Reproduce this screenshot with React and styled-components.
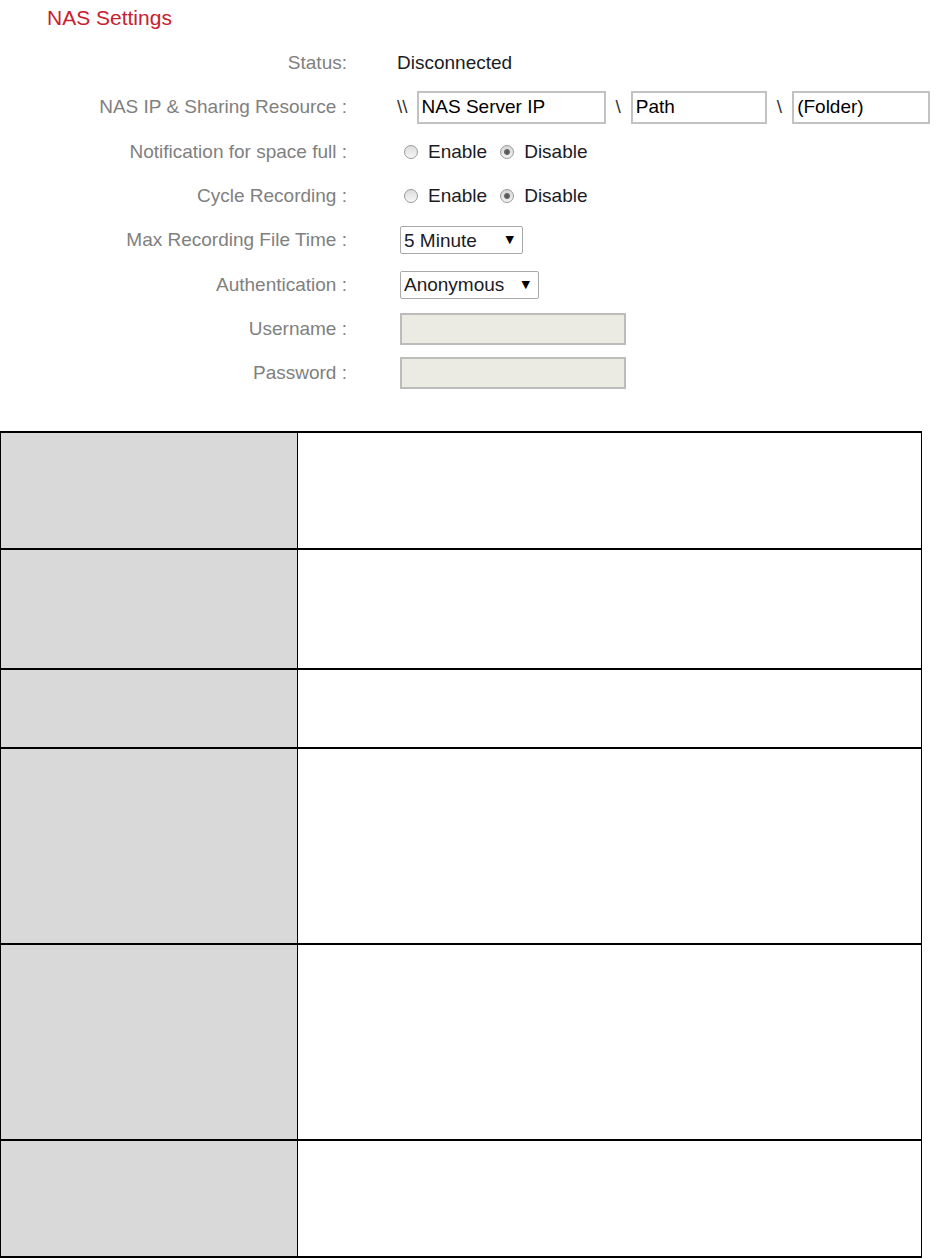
import React from "react";
import styled, { createGlobalStyle } from "styled-components";

const GlobalStyle = createGlobalStyle`
  body {
    margin: 0;
    background: #fff;
    font-family: "Liberation Sans", Arial, sans-serif;
  }
`;

const Page = styled.div`
  width: 951px;
`;

const Title = styled.h2`
  margin: 0;
  height: 41px;
  box-sizing: border-box;
  padding: 6px 0 0 47px;
  font-size: 21px;
  line-height: 24px;
  font-weight: normal;
  color: #c8202f;
`;

const Form = styled.div`
  display: flex;
  flex-direction: column;
`;

const Row = styled.div`
  display: grid;
  grid-template-columns: 347px 1fr;
  column-gap: 50px;
  align-items: center;
  height: 44.3px;
`;

const Label = styled.div`
  text-align: right;
  font-size: 19px;
  color: #808080;
  white-space: nowrap;
`;

const Value = styled.div`
  display: flex;
  align-items: center;
  font-size: 19px;
  color: #1b1b24;
  white-space: nowrap;
`;

const Slash = styled.span`
  margin: ${(p) => p.$margin || "0 10px"};
  color: #333;
`;

const TextBox = styled.input`
  box-sizing: border-box;
  width: ${(p) => p.$width}px;
  height: 33px;
  margin: 0;
  padding: 0 3px;
  border: 2px solid #c2c2c2;
  font-family: "Liberation Sans", Arial, sans-serif;
  font-size: 19px;
  color: #000;
  background: #fff;
  outline: none;

  &:disabled {
    height: 32px;
    margin-left: 3px;
    border-color: #bcbcbc;
    background: #ebebe4;
  }
`;

const RadioWrap = styled.label`
  display: flex;
  align-items: center;
  margin-right: ${(p) => p.$gap || 0}px;
`;

const Radio = styled.input`
  appearance: none;
  box-sizing: border-box;
  width: 14px;
  height: 14px;
  margin: 0 10px 0 ${(p) => p.$offset || 0}px;
  border-radius: 50%;
  border: 1px solid #9a9a9a;
  background: linear-gradient(#dcdcdc, #f7f7f7);

  &:checked {
    background: radial-gradient(circle, #4f4f4f 0, #6a6a6a 2.5px, transparent 3.5px),
      linear-gradient(#d6d6d6, #f2f2f2);
  }
`;

const SelectWrap = styled.div`
  position: relative;
  margin-left: 3px;
`;

const Select = styled.select`
  appearance: none;
  box-sizing: border-box;
  width: ${(p) => p.$width}px;
  height: 28px;
  margin: 0;
  padding: 0 20px 0 3px;
  border: 1px solid #a9a9a9;
  border-radius: 2px;
  background: #fff;
  font-family: "Liberation Sans", Arial, sans-serif;
  font-size: 19px;
  color: #1b1b24;
  outline: none;
`;

const Arrow = styled.span`
  position: absolute;
  right: 9px;
  top: 50%;
  transform: translateY(-55%);
  font-family: "DejaVu Sans", sans-serif;
  font-size: 11px;
  color: #000;
  pointer-events: none;
`;

const Table = styled.div`
  width: 922px;
  margin-top: 36px;
  box-sizing: border-box;
  border-left: 1px solid #000;
  border-right: 1px solid #000;
  border-bottom: 2px solid #000;
`;

const TableRow = styled.div`
  display: grid;
  grid-template-columns: 297px 1fr;
  height: ${(p) => p.$height}px;
  box-sizing: border-box;
  border-top: 2px solid #000;
`;

const HeadCell = styled.div`
  box-sizing: border-box;
  background: #d9d9d9;
  border-right: 1px solid #000;
`;

const BodyCell = styled.div`
  background: #fff;
`;

const rows = [117, 120, 79, 196, 196, 117];

const Dropdown = ({ width, value, options }) => (
  <SelectWrap>
    <Select $width={width} defaultValue={value}>
      {options.map((o) => (
        <option key={o}>{o}</option>
      ))}
    </Select>
    <Arrow>▼</Arrow>
  </SelectWrap>
);

const Toggle = ({ name }) => (
  <Value>
    <RadioWrap $gap={13}>
      <Radio type="radio" name={name} $offset={7} />
      Enable
    </RadioWrap>
    <RadioWrap>
      <Radio type="radio" name={name} defaultChecked />
      Disable
    </RadioWrap>
  </Value>
);

const App = () => {
  return (
    <Page>
      <GlobalStyle />
      <Title>NAS Settings</Title>
      <Form>
        <Row>
          <Label>Status:</Label>
          <Value>Disconnected</Value>
        </Row>
        <Row>
          <Label>NAS IP &amp; Sharing Resource :</Label>
          <Value>
            <Slash $margin="0 9px 0 0">\\</Slash>
            <TextBox $width={189} defaultValue="NAS Server IP" />
            <Slash>\</Slash>
            <TextBox $width={136} defaultValue="Path" />
            <Slash>\</Slash>
            <TextBox $width={138} defaultValue="(Folder)" />
          </Value>
        </Row>
        <Row>
          <Label>Notification for space full :</Label>
          <Toggle name="notify" />
        </Row>
        <Row>
          <Label>Cycle Recording :</Label>
          <Toggle name="cycle" />
        </Row>
        <Row>
          <Label>Max Recording File Time :</Label>
          <Value>
            <Dropdown
              width={123}
              value="5 Minute"
              options={["1 Minute", "3 Minute", "5 Minute", "10 Minute"]}
            />
          </Value>
        </Row>
        <Row>
          <Label>Authentication :</Label>
          <Value>
            <Dropdown
              width={139}
              value="Anonymous"
              options={["Anonymous", "Account"]}
            />
          </Value>
        </Row>
        <Row>
          <Label>Username :</Label>
          <Value>
            <TextBox $width={226} disabled />
          </Value>
        </Row>
        <Row>
          <Label>Password :</Label>
          <Value>
            <TextBox $width={226} type="password" disabled />
          </Value>
        </Row>
      </Form>

      <Table>
        {rows.map((h, i) => (
          <TableRow key={i} $height={h}>
            <HeadCell />
            <BodyCell />
          </TableRow>
        ))}
      </Table>
    </Page>
  );
};

export default App;
